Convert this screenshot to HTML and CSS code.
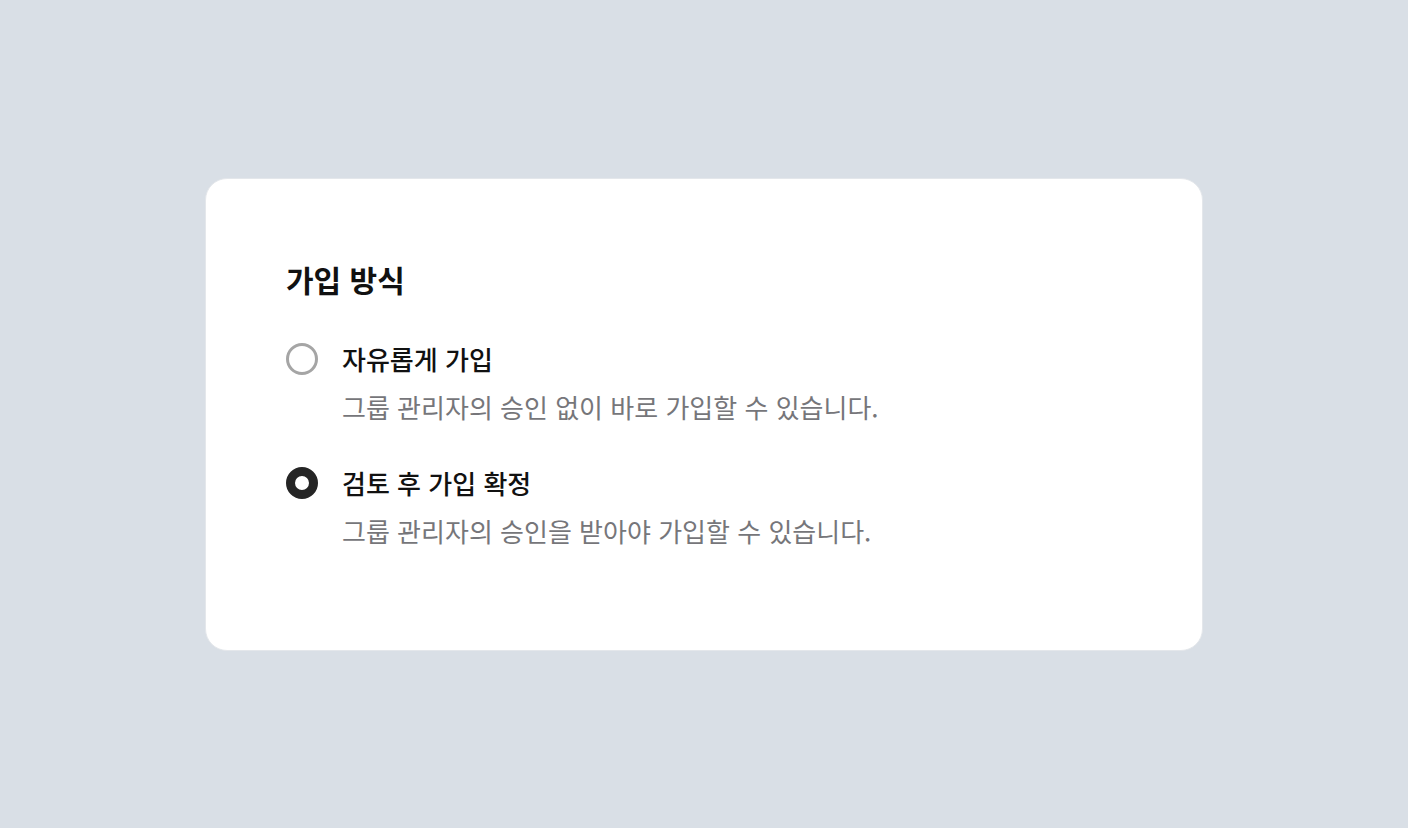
FILE: index.html
```html
<!DOCTYPE html>
<html lang="ko">
<head>
    <meta charset="UTF-8">
    <meta name="viewport" content="width=device-width, initial-scale=1.0">
    <title>가입 방식</title>
    <link rel="stylesheet" href="styles.css">
</head>
<body>
    <div class="card">
        <h2 class="card-title">가입 방식</h2>
        <div class="options">
            <label class="option">
                <span class="radio"></span>
                <span class="option-title">자유롭게 가입</span>
                <span class="option-desc">그룹 관리자의 승인 없이 바로 가입할 수 있습니다.</span>
            </label>
            <label class="option">
                <span class="radio checked"></span>
                <span class="option-title">검토 후 가입 확정</span>
                <span class="option-desc">그룹 관리자의 승인을 받아야 가입할 수 있습니다.</span>
            </label>
        </div>
    </div>
</body>
</html>
```

FILE: styles.css
```css
body {
    margin: 0;
    min-height: 100vh;
    display: flex;
    align-items: center;
    justify-content: center;
    background-color: #d9dfe6;
    font-family: "Noto Sans CJK KR", "Noto Sans", sans-serif;
}

.card {
    box-sizing: border-box;
    width: 998px;
    height: 473px;
    padding: 78px 80px 0;
    background-color: white;
    border: 1px solid #e4e7eb;
    border-radius: 22px;
}

.card-title {
    margin: 0;
    font-size: 30px;
    line-height: 44px;
    font-weight: 700;
    color: #111;
}

.options {
    margin-top: 40px;
    display: flex;
    flex-direction: column;
    gap: 40px;
}

.option {
    display: grid;
    grid-template-columns: 32px 1fr;
    column-gap: 24px;
    row-gap: 12px;
    cursor: pointer;
}

.radio {
    box-sizing: border-box;
    width: 32px;
    height: 32px;
    align-self: center;
    border: 3px solid #a5a5a5;
    border-radius: 50%;
    background-color: white;
}

.radio.checked {
    border: 9px solid #252525;
}

.option-title {
    font-size: 26px;
    line-height: 36px;
    font-weight: 500;
    color: #111;
}

.option-desc {
    grid-column: 2;
    font-size: 26px;
    line-height: 36px;
    font-weight: 400;
    color: #76767a;
}
```
